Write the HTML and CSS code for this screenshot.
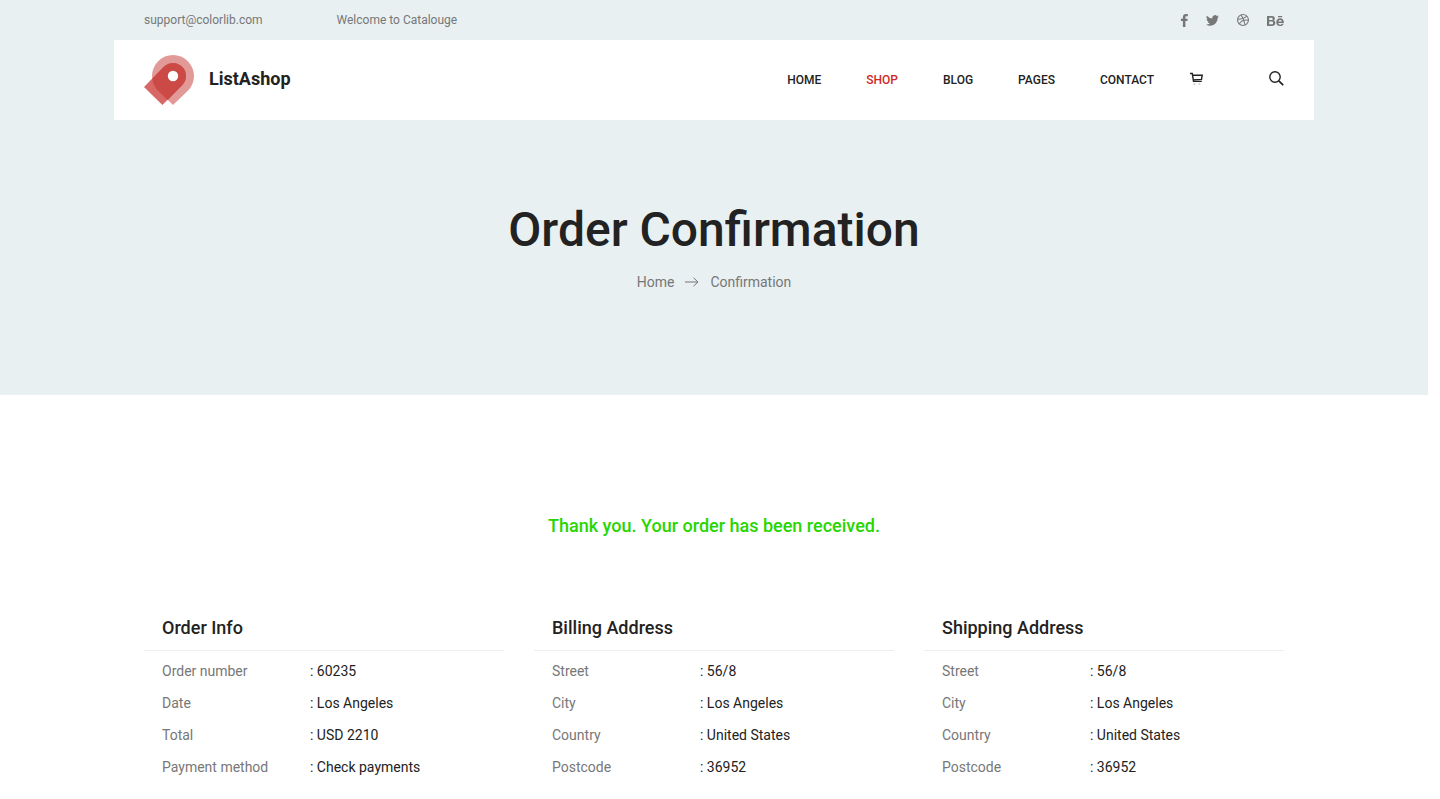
FILE: index.html
```html
<!DOCTYPE html>
<html lang="en">
<head>
<meta charset="utf-8">
<meta name="viewport" content="width=device-width, initial-scale=1">
<title>ListAshop - Order Confirmation</title>
<link rel="stylesheet" href="styles.css">
</head>
<body>
<div class="hero">
  <header class="container">
    <div class="topbar">
      <a href="#">support@colorlib.com</a>
      <a href="#" class="welcome">Welcome to Catalouge</a>
      <div class="social">
        <a href="#" aria-label="Facebook"><svg width="8" height="13" viewBox="0 0 8 13"><path d="M7.8.1v2.1H6.5c-.9 0-1.1.4-1.1 1.1v1.4h2.3L7.4 7H5.4v6H2.9V7H.9V4.700h2V3C2.900 1.100 4.100 0 5.900 0c.9 0 1.600.1 1.900.1z"/></svg></a>
        <a href="#" aria-label="Twitter"><svg width="13" height="11" viewBox="0 0 24 20"><path d="M24 2.400a10 10 0 0 1-2.800.8A5 5 0 0 0 23.300.5a10 10 0 0 1-3.100 1.200A4.900 4.900 0 0 0 11.800 6.200 14 14 0 0 1 1.700 1a4.900 4.900 0 0 0 1.500 6.600A5 5 0 0 1 1 7a4.900 4.900 0 0 0 3.900 4.900 5 5 0 0 1-2.200.1 4.900 4.900 0 0 0 4.600 3.400A9.900 9.900 0 0 1 0 17.400 14 14 0 0 0 7.500 19.600c9.100 0 14.300-7.700 14-14.600A10 10 0 0 0 24 2.400z"/></svg></a>
        <a href="#" aria-label="Dribbble"><svg width="12" height="12" viewBox="0 0 24 24"><g fill="none" stroke="currentColor" stroke-width="2.200"><circle cx="12" cy="12" r="10.900"/><path d="M1.200 10.500c6 .1 13-.5 18.200-6.500M8 1.800c4 5.500 6.500 11.500 8 19.700M4.500 20c4-7 11-9 18.500-7.500"/></g></svg></a>
        <a href="#" aria-label="Behance"><svg width="17" height="11" viewBox="0 0 17 11"><path fill-rule="evenodd" d="M0 1h4.700c2 0 3.200.8 3.200 2.500 0 1-.5 1.700-1.400 2.100 1.200.3 1.900 1.200 1.900 2.400C8.400 10 6.900 11 4.900 11H0zM2.200 2.700v2.400h2.100c.9 0 1.400-.4 1.400-1.200 0-.9-.6-1.200-1.500-1.200zm0 3.900v2.700h2.300c1 0 1.600-.4 1.600-1.300 0-1-.6-1.400-1.600-1.400zM11 1.100h4.200v1.100H11zM16.900 8h-5.500c0 1.100.7 1.700 1.700 1.700.8 0 1.400-.4 1.600-1h1.900c-.6 1.700-1.800 2.400-3.500 2.400-2.400 0-3.800-1.600-3.800-3.900 0-2.200 1.500-3.900 3.800-3.900 2.600 0 3.900 2.100 3.800 4.700zm-5.500-1.400h3.400c-.2-1-.7-1.500-1.700-1.500s-1.600.6-1.700 1.500z"/></svg></a>
      </div>
    </div>
    <nav class="navbar" aria-label="Main">
      <a class="brand" href="#">
        <svg width="50" height="50" viewBox="0 0 50 50"><path fill="#e29a98" d="M14.150 35.850A21 21 0 1 1 43.850 35.850L29 50z"/><path fill="#d76865" d="M0 32L19.800 11.800A13 13 0 0 1 38.200 30.200L18.400 50z"/><path fill="#cc4a46" d="M8.400 23.500L19.800 11.800A13 13 0 0 1 38.200 30.200L23.700 44.900 14.150 35.850Q8.500 30 8.400 23.500z"/><circle cx="29" cy="21" r="5.200" fill="#fff"/></svg>
        <span>ListAshop</span>
      </a>
      <ul class="menu">
        <li><a href="#">HOME</a></li>
        <li><a href="#" class="active">SHOP</a></li>
        <li><a href="#">BLOG</a></li>
        <li><a href="#">PAGES</a></li>
        <li><a href="#">CONTACT</a></li>
      </ul>
      <div class="tools">
        <a href="#" aria-label="Cart"><svg width="13" height="14" viewBox="0 0 13 14"><path class="line" stroke-width="1.400" d="M0 1.500h2.300L3.500 9.400h8.300M2.600 3.200h9.600l-.7 4.200-8.200.5"/><circle cx="4.500" cy="12" r="1" fill="#ccc"/><circle cx="9.500" cy="12" r="1" fill="#ccc"/></svg></a>
        <button class="search" type="button" aria-label="Search"><svg width="15" height="15" viewBox="0 0 15 15"><circle class="line" cx="6" cy="6" r="5.200" stroke-width="1.400"/><path class="line" d="M9.800 9.800l4.400 4.400" stroke-width="1.700"/></svg></button>
      </div>
    </nav>
  </header>
  <div class="banner">
    <h1>Order Confirmation</h1>
    <nav class="crumbs" aria-label="Breadcrumb">
      <a href="#">Home</a>
      <svg width="14" height="10" viewBox="0 0 14 10"><path class="line" d="M0 5h13M8.500.8L13 5 8.500 9.200"/></svg>
      <a href="#">Confirmation</a>
    </nav>
  </div>
</div>
<main class="container order">
  <p class="thanks">Thank you. Your order has been received.</p>
  <div class="cards">
    <section class="card">
      <h2>Order Info</h2>
      <dl>
        <dt>Order number</dt><dd>: 60235</dd>
        <dt>Date</dt><dd>: Los Angeles</dd>
        <dt>Total</dt><dd>: USD 2210</dd>
        <dt>Payment method</dt><dd>: Check payments</dd>
      </dl>
    </section>
    <section class="card">
      <h2>Billing Address</h2>
      <dl>
        <dt>Street</dt><dd>: 56/8</dd>
        <dt>City</dt><dd>: Los Angeles</dd>
        <dt>Country</dt><dd>: United States</dd>
        <dt>Postcode</dt><dd>: 36952</dd>
      </dl>
    </section>
    <section class="card">
      <h2>Shipping Address</h2>
      <dl>
        <dt>Street</dt><dd>: 56/8</dd>
        <dt>City</dt><dd>: Los Angeles</dd>
        <dt>Country</dt><dd>: United States</dd>
        <dt>Postcode</dt><dd>: 36952</dd>
      </dl>
    </section>
  </div>
</main>
</body>
</html>
```
FILE: styles.css
```css
* { box-sizing: border-box; }
body {
  margin: 0;
  padding-right: 12px;
  background: #fff;
  color: #777;
  font: 14px/24px Roboto, sans-serif;
}
a { color: inherit; text-decoration: none; }
svg { display: block; fill: currentColor; }
.line { fill: none; stroke: currentColor; }
h1, h2, p, ul, dl, dd { margin: 0; padding: 0; }
.container { max-width: 1200px; margin: 0 auto; }
.hero { background: #e8f0f2; padding-bottom: 100px; }
.topbar {
  display: flex;
  align-items: center;
  height: 40px;
  padding: 0 30px;
  font-size: 12px;
}
.welcome { margin-left: 74px; }
.social { display: flex; align-items: center; gap: 18px; margin-left: auto; }
.navbar {
  display: flex;
  align-items: center;
  height: 80px;
  padding: 0 30px;
  background: #fff;
  color: #222;
}
.brand {
  display: flex;
  align-items: center;
  gap: 15px;
  font-size: 18px;
  font-weight: 700;
}
.brand span { padding-bottom: 2px; }
.menu {
  display: flex;
  gap: 45px;
  margin-left: auto;
  list-style: none;
  font-size: 12px;
  font-weight: 500;
}
.active { color: #cc2b28; }
.tools {
  display: flex;
  align-items: center;
  gap: 66px;
  margin-left: 36px;
  padding-bottom: 3px;
}
.search {
  padding: 0;
  border: 0;
  background: none;
  color: inherit;
  cursor: pointer;
}
.banner { padding-top: 80px; text-align: center; }
h1 { color: #222; font-size: 48px; font-weight: 500; line-height: 60px; }
.crumbs {
  display: flex;
  justify-content: center;
  align-items: center;
  gap: 11px;
  margin: 10px 0 1px;
}
.order { padding: 119px 30px 0; }
.thanks {
  color: #28d500;
  font-size: 18px;
  font-weight: 500;
  text-align: center;
}
.cards {
  display: grid;
  grid-template-columns: repeat(auto-fit, minmax(300px, 1fr));
  gap: 30px;
  margin-top: 78px;
}
h2 {
  padding: 0 18px 10px;
  border-bottom: 1px solid #eee;
  color: #222;
  font-size: 18px;
  font-weight: 500;
}
.card dl {
  display: grid;
  grid-template-columns: 148px 1fr;
  gap: 8px 0;
  padding: 8px 18px;
}
.card dd { color: #222; }
```
